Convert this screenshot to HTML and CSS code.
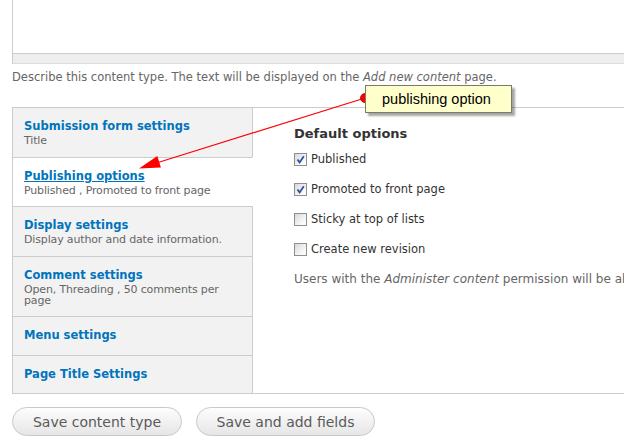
FILE: index.html
```html
<!DOCTYPE html>
<html lang="en">
<head>
<meta charset="utf-8">
<title>Content type</title>
<link rel="stylesheet" href="styles.css">
</head>
<body>
<div class="page">
  <div class="textarea">
    <div class="textarea-body"></div>
    <div class="grip"></div>
  </div>
  <p class="desc">Describe this content type. The text will be displayed on the <em>Add new content</em> page.</p>

  <div class="vtabs">
    <ul class="tab-list">
      <li class="tab">
        <a class="tab-title" href="#">Submission form settings</a>
        <span class="tab-summary">Title</span>
      </li>
      <li class="tab selected">
        <a class="tab-title" href="#">Publishing options</a>
        <span class="tab-summary">Published , Promoted to front page</span>
      </li>
      <li class="tab">
        <a class="tab-title" href="#">Display settings</a>
        <span class="tab-summary">Display author and date information.</span>
      </li>
      <li class="tab">
        <a class="tab-title" href="#">Comment settings</a>
        <span class="tab-summary">Open, Threading , 50 comments per page</span>
      </li>
      <li class="tab">
        <a class="tab-title" href="#">Menu settings</a>
      </li>
      <li class="tab">
        <a class="tab-title" href="#">Page Title Settings</a>
      </li>
    </ul>
    <div class="pane">
      <h3 class="pane-title">Default options</h3>
      <div class="check-row"><span class="cbox checked"><svg viewBox="0 0 11 11" width="11" height="11"><path d="M2.5 5.5 L4.6 8.4 L8.8 2.2" fill="none" stroke="#2f4f9e" stroke-width="1.8"/></svg></span><span class="label">Published</span></div>
      <div class="check-row"><span class="cbox checked"><svg viewBox="0 0 11 11" width="11" height="11"><path d="M2.5 5.5 L4.6 8.4 L8.8 2.2" fill="none" stroke="#2f4f9e" stroke-width="1.8"/></svg></span><span class="label">Promoted to front page</span></div>
      <div class="check-row"><span class="cbox"></span><span class="label">Sticky at top of lists</span></div>
      <div class="check-row"><span class="cbox"></span><span class="label">Create new revision</span></div>
      <p class="pane-desc">Users with the <em>Administer content</em> permission will be able to override these options.</p>
    </div>
  </div>

  <div class="actions">
    <button class="btn">Save content type</button>
    <button class="btn">Save and add fields</button>
  </div>
</div>

<svg class="annotation" width="624" height="444" viewBox="0 0 624 444">
  <line x1="365" y1="98" x2="150" y2="165" stroke="#ff0000" stroke-width="1.2"/>
  <polygon points="139,168.5 157.3,156.1 160.9,167.5" fill="#ff0000"/>
  <circle cx="365" cy="98" r="4.5" fill="#ff0000" stroke="#b00000" stroke-width="0.8"/>
</svg>
<div class="callout">publishing option</div>
</body>
</html>
```
FILE: styles.css
```css
html, body {
  margin: 0;
  padding: 0;
  overflow: hidden;
  background: #fff;
}
body {
  width: 624px;
  height: 444px;
  position: relative;
  font-family: "DejaVu Sans", Verdana, sans-serif;
  color: #333;
}
.page {
  padding-left: 12px;
  width: 900px;
}
.textarea {
  border-left: 1px solid #ccc;
  border-right: 1px solid #ccc;
}
.textarea-body {
  height: 53px;
  background: #fff;
}
.grip {
  height: 9px;
  background: #eee;
  border-top: 1px solid #ccc;
  border-bottom: 1px solid #ddd;
}
.desc {
  margin: 4px 0 0;
  font-size: 11.5px;
  line-height: 18px;
  color: #666;
}
.desc em, .pane-desc em {
  font-style: italic;
}
.vtabs {
  margin-top: 21px;
  display: flex;
  border-top: 1px solid #ccc;
  border-bottom: 1px solid #ccc;
  border-left: 1px solid #ccc;
}
.tab-list {
  list-style: none;
  margin: 0;
  padding: 0;
  width: 240px;
  flex: none;
}
.tab {
  background: #f2f2f2;
  border-right: 1px solid #ccc;
  padding: 9px 12px 10.5px 11px;
}
.tab + .tab {
  border-top: 1px solid #ccc;
}
.tab.selected {
  background: #fff;
  border-right-color: #fff;
}
.tab-title {
  display: block;
  font-size: 11.5px;
  line-height: 18px;
  font-weight: bold;
  color: #0074bd;
  text-decoration: none;
}
.selected .tab-title {
  text-decoration: underline;
}
.tab-summary {
  display: block;
  font-size: 11px;
  letter-spacing: -0.15px;
  line-height: 11px;
  color: #666;
}
.pane {
  flex: 1;
  padding: 17px 0 0 41px;
}
.pane-title {
  margin: 0 0 7px;
  font-size: 13px;
  line-height: 18px;
  font-weight: bold;
  color: #333;
}
.check-row {
  display: flex;
  align-items: center;
  height: 18px;
  margin-bottom: 12px;
  font-size: 11.5px;
  color: #333;
}
.cbox {
  width: 11px;
  height: 11px;
  border: 1px solid #8f8f8f;
  background: linear-gradient(135deg, #d8d8d8, #f8f8f8 70%, #ffffff);
  margin-right: 4px;
  display: flex;
  align-items: center;
  justify-content: center;
  flex: none;
}
.pane-desc {
  margin: 11px 0 0;
  font-size: 12px;
  line-height: 18px;
  color: #666;
  white-space: nowrap;
}
.actions {
  margin-top: 13px;
  display: flex;
  gap: 14px;
}
.btn {
  height: 29px;
  width: 170px;
  border: 1px solid #c8c8c8;
  border-radius: 15px;
  background: linear-gradient(#fdfdfd, #e6e6e6);
  font-family: "DejaVu Sans", Verdana, sans-serif;
  font-size: 14px;
  color: #5a5a5a;
  padding: 0 16px;
  white-space: nowrap;
}
.btn + .btn {
  width: 179px;
}
.annotation {
  position: absolute;
  left: 0;
  top: 0;
  pointer-events: none;
}
.callout {
  position: absolute;
  left: 365px;
  top: 85px;
  width: 129px;
  height: 26px;
  padding-left: 16px;
  background: #ffffcc;
  border: 1px solid #7a7a6a;
  box-shadow: 3px 3px 2px rgba(0,0,0,0.35);
  font-family: "Liberation Sans", Arial, sans-serif;
  font-size: 14.5px;
  line-height: 26px;
  color: #000;
}
```
